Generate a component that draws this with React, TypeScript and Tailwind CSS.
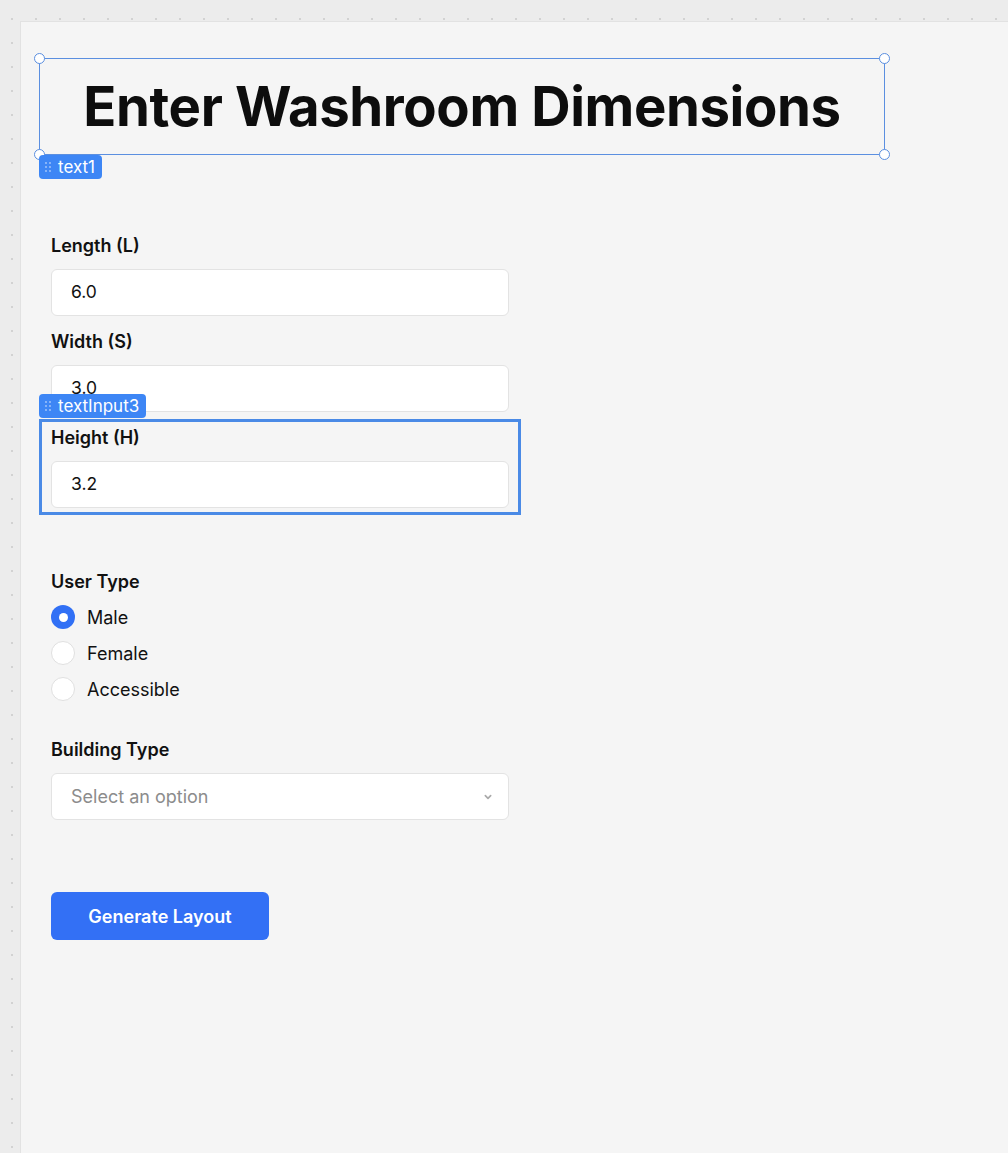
import React from "react";

const font = { fontFamily: "Inter, 'Noto Sans', sans-serif" };

function DragDots() {
  return (
    <svg width="6" height="10" viewBox="0 0 6 10" className="shrink-0">
      {[1, 5].map((x) =>
        [1, 5, 9].map((y) => <circle key={`${x}-${y}`} cx={x} cy={y} r="0.9" fill="#a9c9fb" />)
      )}
    </svg>
  );
}

function Chip({ label }: { label: string }) {
  return (
    <div className="flex items-center gap-[7px] h-[24px] pl-[6px] pr-[7px] rounded-[4px] bg-[#3d86f5] text-white text-[17px] leading-none">
      <DragDots />
      <span>{label}</span>
    </div>
  );
}

function Handle({ className }: { className: string }) {
  return (
    <div
      className={`absolute w-[11px] h-[11px] rounded-full bg-white border border-[#5b8fe0] ${className}`}
    />
  );
}

function Field({ label, value, selected }: { label: string; value: string; selected?: boolean }) {
  return (
    <div className="relative w-[482px] h-[96px] px-[12px] pt-[7px]">
      {selected && (
        <>
          <div className="absolute inset-0 border-[3px] border-[#4a8ae6] pointer-events-none" />
          <div className="absolute left-0 bottom-full mb-[1px]">
            <Chip label="textInput3" />
          </div>
        </>
      )}
      <div className="text-[18px] leading-[24px] font-semibold text-[#111]">{label}</div>
      <div className="mt-[11px] h-[47px] rounded-[6px] border border-[#e3e3e3] bg-white flex items-center px-[19px] text-[17.5px] text-[#111]">
        {value}
      </div>
    </div>
  );
}

function Radio({ label, checked }: { label: string; checked?: boolean }) {
  return (
    <div className="flex items-center h-[36px] gap-[12px]">
      {checked ? (
        <div className="w-[24px] h-[24px] rounded-full bg-[#3170f5] flex items-center justify-center">
          <div className="w-[9px] h-[9px] rounded-full bg-white" />
        </div>
      ) : (
        <div className="w-[24px] h-[24px] rounded-full bg-white border border-[#e0e0e0]" />
      )}
      <span className="text-[18px] text-[#111]">{label}</span>
    </div>
  );
}

export default function App() {
  return (
    <div
      style={font}
      className="w-[1008px] h-[1153px] overflow-hidden bg-[#ececec] bg-[radial-gradient(circle,#d2d2d2_1px,transparent_1.5px)] bg-[size:24px_24px] bg-[position:0px_7px] pt-[21px] pl-[20px]"
    >
      <div className="h-full bg-[#f5f5f5] border-l border-t border-[#e2e2e2] pl-[18px] pt-[36px]">
        {/* title component, selected */}
        <div className="relative w-[846px] h-[97px] border border-[#5b8fe0] flex items-center justify-center">
          <h1 className="text-[54.5px] font-bold text-[#0d0d0d] tracking-[-0.4px] leading-none">
            Enter Washroom Dimensions
          </h1>
          <Handle className="-left-[6px] -top-[6px]" />
          <Handle className="-right-[6px] -top-[6px]" />
          <Handle className="-left-[6px] -bottom-[6px]" />
          <Handle className="-right-[6px] -bottom-[6px]" />
          <div className="absolute -left-px top-full mt-[1px]">
            <Chip label="text1" />
          </div>
        </div>

        <div className="mt-[72px]">
          <Field label="Length (L)" value="6.0" />
          <Field label="Width (S)" value="3.0" />
          <Field label="Height (H)" value="3.2" selected />
        </div>

        <div className="mt-[48px] w-[482px] px-[12px] pt-[7px]">
          <div className="text-[18px] leading-[24px] font-semibold text-[#111]">User Type</div>
          <div className="mt-[5px] flex flex-col">
            <Radio label="Male" checked />
            <Radio label="Female" />
            <Radio label="Accessible" />
          </div>
        </div>

        <div className="mt-[24px] w-[482px] px-[12px] pt-[7px]">
          <div className="text-[18px] leading-[24px] font-semibold text-[#111]">Building Type</div>
          <div className="mt-[11px] h-[47px] rounded-[6px] border border-[#e3e3e3] bg-white flex items-center justify-between pl-[19px] pr-[12px]">
            <span className="text-[18px] text-[#8c8c8c]">Select an option</span>
            <svg width="16" height="16" viewBox="0 0 24 24" fill="none" stroke="#aaaaaa" strokeWidth="2.5" strokeLinecap="round" strokeLinejoin="round">
              <path d="M8 10l4 4 4-4" />
            </svg>
          </div>
        </div>

        <div className="mt-[72px] pl-[12px]">
          <button className="w-[218px] h-[48px] rounded-[6px] bg-[#3370f5] text-white text-[18px] font-semibold">
            Generate Layout
          </button>
        </div>
      </div>
    </div>
  );
}
